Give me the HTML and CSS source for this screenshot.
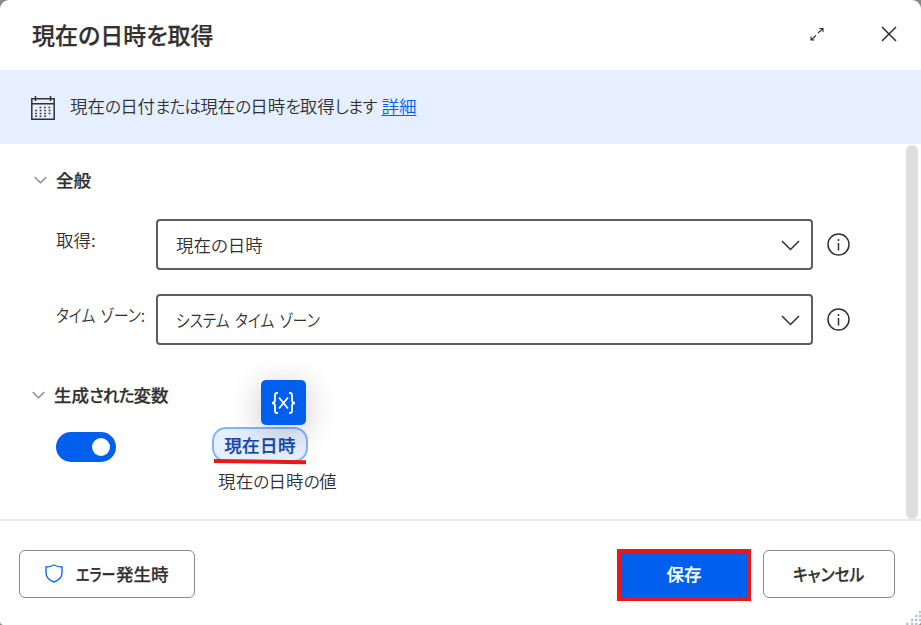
FILE: index.html
```
<!DOCTYPE html>
<html lang="ja">
<head>
    <meta charset="UTF-8">
    <meta name="viewport" content="width=device-width, initial-scale=1.0">
    <title>現在の日時を取得</title>
    <link rel="stylesheet" href="styles.css">
</head>
<body>
    <div class="dialog">
        <header class="header">
            <h1>現在の日時を取得</h1>
            <button class="icon-button" type="button" aria-label="expand">
                <svg class="expand" width="16" height="16" viewBox="0 0 16 16">
                    <path d="M9 7l5-4.500M10.500 2.500h3.500v3.500M7 9.500l-5 4.500M2 10.500v3.500h3.500"/>
                </svg>
            </button>
            <button class="icon-button" type="button" aria-label="close">
                <svg class="close" width="16" height="16" viewBox="0 0 16 16">
                    <path d="M1 1l14 14M15 1L1 15"/>
                </svg>
            </button>
        </header>

        <div class="banner">
            <svg class="calendar" width="26" height="24" viewBox="0 0 26 24">
                <path d="M1.8 2.8h22.4v20.4H1.8zM1.8 7.8h22.4M5.5 0v5M20.5 0v5"/>
                <path class="dots" d="M9.5 11.5h12M5.2 14.5h16M5.2 17.5h16M5.2 20.3h12"/>
            </svg>
            <p>現在<span class="kana">の</span>日付<span class="kana">または</span>現在<span class="kana">の</span>日時<span class="kana">を</span>取得<span class="kana">します</span><a href="#">詳細</a></p>
        </div>

        <main class="content">
            <div class="fields">
                <div class="section-title">
                    <svg class="chevron" width="13" height="8" viewBox="0 0 13 8"><path d="M.7 1l5.800 5.800L12.300 1"/></svg>
                    <h2>全般</h2>
                </div>
                <div class="row">
                    <label>取得:</label>
                    <div class="select">
                        <span class="value">現在の日時</span>
                        <svg width="19" height="11" viewBox="0 0 19 11"><path d="M1 1l8.5 8.5L18 1"/></svg>
                    </div>
                    <svg class="info" width="24" height="24" viewBox="0 0 24 24">
                        <circle cx="12.5" cy="11.5" r="10.500"/>
                        <path d="M12.5 10v7.500M12.500 6v2"/>
                    </svg>
                </div>
                <div class="row">
                    <label><span class="narrow label-text">タイム ゾーン:</span></label>
                    <div class="select">
                        <span class="value narrow">システム タイム ゾーン</span>
                        <svg width="19" height="11" viewBox="0 0 19 11"><path d="M1 1l8.5 8.5L18 1"/></svg>
                    </div>
                    <svg class="info" width="24" height="24" viewBox="0 0 24 24">
                        <circle cx="12.5" cy="11.5" r="10.500"/>
                        <path d="M12.5 10v7.500M12.500 6v2"/>
                    </svg>
                </div>

                <div class="section-title variables-title">
                    <svg class="chevron" width="13" height="8" viewBox="0 0 13 8"><path d="M.7 1l5.800 5.800L12.300 1"/></svg>
                    <h2>生成<span class="kana">された</span>変数</h2>
                </div>
                <div class="variables">
                    <div class="toggle"></div>
                    <div class="variable">
                        <div class="chip">
                            <span class="chip-text">現在日時</span>
                            <div class="picker">
                                <svg width="26" height="22" viewBox="0 0 26 22">
                                    <path d="M7 1H6Q4 1 4 3v5q0 3-3 3 3 0 3 3v5q0 2 2 2h1M18 1h1q2 0 2 2v5q0 3 3 3-3 0-3 3v5q0 2-2 2h-1M8 5.500l9 11M17 5.500l-9 11"/>
                                </svg>
                            </div>
                            <svg class="underline" width="92" height="6" viewBox="0 0 92 6"><path d="M0 2l92 1.2"/></svg>
                        </div>
                        <p class="variable-note">現在<span class="kana">の</span>日時<span class="kana">の</span>値</p>
                    </div>
                </div>
            </div>
            <div class="scrollbar"></div>
        </main>

        <footer class="footer">
            <button class="button error-button" type="button">
                <svg width="18" height="19" viewBox="0 0 18 19">
                    <path d="M9 1Q5.500 3 1 3v6c0 4 3 7 8 9 5-2 8-5 8-9V3Q12.500 3 9 1z"/>
                </svg>
                <span class="narrow error-kana">エラー</span><span>発生時</span>
            </button>
            <button class="button save-button" type="button">保存</button>
            <button class="button cancel-button" type="button"><span class="narrow cancel-text">キャンセル</span></button>
        </footer>
        <svg class="grip" width="16" height="14" viewBox="0 0 16 14">
            <path d="M14 1h3M10 5h3M14 5h3M6 9h3M10 9h3M14 9h3M1 13h3M6 13h3M10 13h3"/>
        </svg>
    </div>
</body>
</html>
```
FILE: styles.css
```
* {
    box-sizing: border-box;
}
body {
    margin: 0;
    background-color: #8a8a8a;
    font-family: "Noto Sans CJK JP", sans-serif;
    font-size: 17.5px;
    font-weight: 350;
    color: #323130;
    font-feature-settings: "palt";
}
h1, h2, p {
    margin: 0;
}
svg {
    display: block;
    flex: none;
    fill: none;
    stroke: #323130;
    stroke-width: 1.5;
}
/* kana is set tighter than kanji */
.kana {
    font-size: .95em;
    letter-spacing: -.9px;
}
.narrow {
    display: inline-block;
    transform: scaleX(.84);
    transform-origin: left;
    word-spacing: 2.5px;
}
.dialog {
    position: relative;
    display: flex;
    flex-direction: column;
    width: 921px;
    height: 625px;
    background-color: #fff;
    border-radius: 9px 9px 4px 4px;
    overflow: hidden;
}
.header {
    display: flex;
    align-items: center;
    height: 70px;
    padding: 0 24px 2px 32px;
}
h1 {
    flex: 1;
    font-size: 23px;
    line-height: 32px;
    font-weight: 500;
    white-space: nowrap;
}
h1, h2, .button, .chip-text {
    -webkit-text-stroke: .25px currentColor;
}
.icon-button {
    padding: 0;
    border: 0;
    background: none;
}
.expand {
    margin-right: 56px;
    stroke-width: 1.1;
}
.close {
    margin-bottom: 1px;
}
.banner {
    display: flex;
    align-items: center;
    height: 74px;
    padding-left: 30px;
    background-color: #e5efff;
}
.banner p {
    display: flex;
    align-items: baseline;
    margin: 0 0 2px 14px;
    line-height: 24px;
    white-space: nowrap;
}
.banner a {
    margin-left: 5px;
    color: #005fec;
    text-underline-offset: 2px;
}
.calendar {
    margin-top: 1px;
}
.calendar .dots {
    stroke-width: 1.6;
    stroke-dasharray: 1.7 2.8;
}
.content {
    display: flex;
    height: 375px;
}
.fields {
    flex: 1;
    padding: 24px 0 0 34px;
}
.section-title {
    display: flex;
    align-items: center;
    height: 24px;
}
.section-title h2 {
    margin: 0 0 1px 9px;
    font-size: 17.5px;
    line-height: 24px;
    font-weight: 500;
    white-space: nowrap;
}
.chevron {
    stroke: #8a8886;
    stroke-width: 1.3;
}
.row {
    display: flex;
    align-items: center;
    height: 51px;
    margin: 27px 0 24px 22px;
}
.row + .row {
    margin-top: 0;
}
.row label {
    width: 100px;
    padding-bottom: 9px;
    line-height: 24px;
    white-space: nowrap;
}
.select {
    display: flex;
    flex: none;
    align-items: center;
    justify-content: space-between;
    width: 657px;
    height: 51px;
    padding: 0 11px 0 18px;
    border: 2px solid #605e5c;
    border-radius: 4px;
}
.select svg {
    margin-top: 2px;
}
.info {
    margin-left: 13px;
}
.variables-title {
    margin: 38px 0 0 -2px;
}
.variables {
    display: flex;
    margin: 20px 0 0 22px;
}
.toggle {
    width: 60px;
    height: 30px;
    margin-top: 5px;
    padding: 6px 6px 6px 36px;
    border-radius: 15px;
    background-color: #005fec;
}
.toggle::before {
    content: "";
    display: block;
    width: 18px;
    height: 18px;
    border-radius: 50%;
    background-color: #fff;
}
.variable {
    margin-left: 96px;
}
.chip {
    position: relative;
    width: 96px;
    height: 35px;
    border: 2px solid #84b5fb;
    border-radius: 14px;
    background-color: #e5efff;
    color: #1549a9;
    font-weight: 500;
    line-height: 31px;
    text-align: center;
}
.chip-text {
    letter-spacing: .4px;
}
/* variable picker floats above the chip */
.picker {
    position: absolute;
    left: 47px;
    top: -49px;
    display: flex;
    align-items: center;
    justify-content: center;
    width: 45px;
    height: 45px;
    border-radius: 5px;
    background-color: #005fec;
    box-shadow: 0 7px 32px rgba(0, 0, 0, .23);
}
.picker svg {
    stroke: #fff;
    stroke-width: 1.8;
}
.underline {
    position: absolute;
    left: 0;
    top: 30px;
    stroke: #e8191c;
    stroke-width: 4;
}
.variable-note {
    margin: 7px 0 0 6px;
    line-height: 24px;
    letter-spacing: .15px;
    white-space: nowrap;
}
.scrollbar {
    width: 12px;
    height: 374px;
    margin: 1px 3px 0 0;
    border-radius: 6px;
    background-color: #dfdedd;
}
.footer {
    display: flex;
    align-items: center;
    height: 106px;
    padding: 3px 26px 0 19px;
    border-top: 2px solid #edebe9;
}
.button {
    display: flex;
    align-items: center;
    justify-content: center;
    height: 48px;
    margin-bottom: 2px;
    padding: 0;
    border: 1px solid #8a8886;
    border-radius: 6px;
    background-color: #fff;
    color: #323130;
    font: inherit;
    font-weight: 500;
    white-space: nowrap;
}
.error-button {
    justify-content: flex-start;
    width: 176px;
    margin-right: auto;
    padding-left: 25px;
}
.error-button svg {
    margin-right: 13px;
    stroke: #0f6cee;
    stroke-width: 1.4;
}
.error-kana {
    width: 40px;
    transform: scaleX(.8);
}
.save-button {
    width: 134px;
    height: 52px;
    margin-bottom: 0;
    padding-bottom: 2px;
    border: 4px solid #e8191c;
    border-radius: 0;
    background-color: #005fec;
    color: #fff;
}
.cancel-button {
    width: 132px;
    margin-left: 12px;
}
.cancel-text {
    transform: scaleX(.9);
    transform-origin: center;
}
.grip {
    position: absolute;
    right: 0;
    bottom: 0;
    stroke: #b9c3d6;
    stroke-width: 2.5;
    stroke-dasharray: 2.5 2;
}
```
